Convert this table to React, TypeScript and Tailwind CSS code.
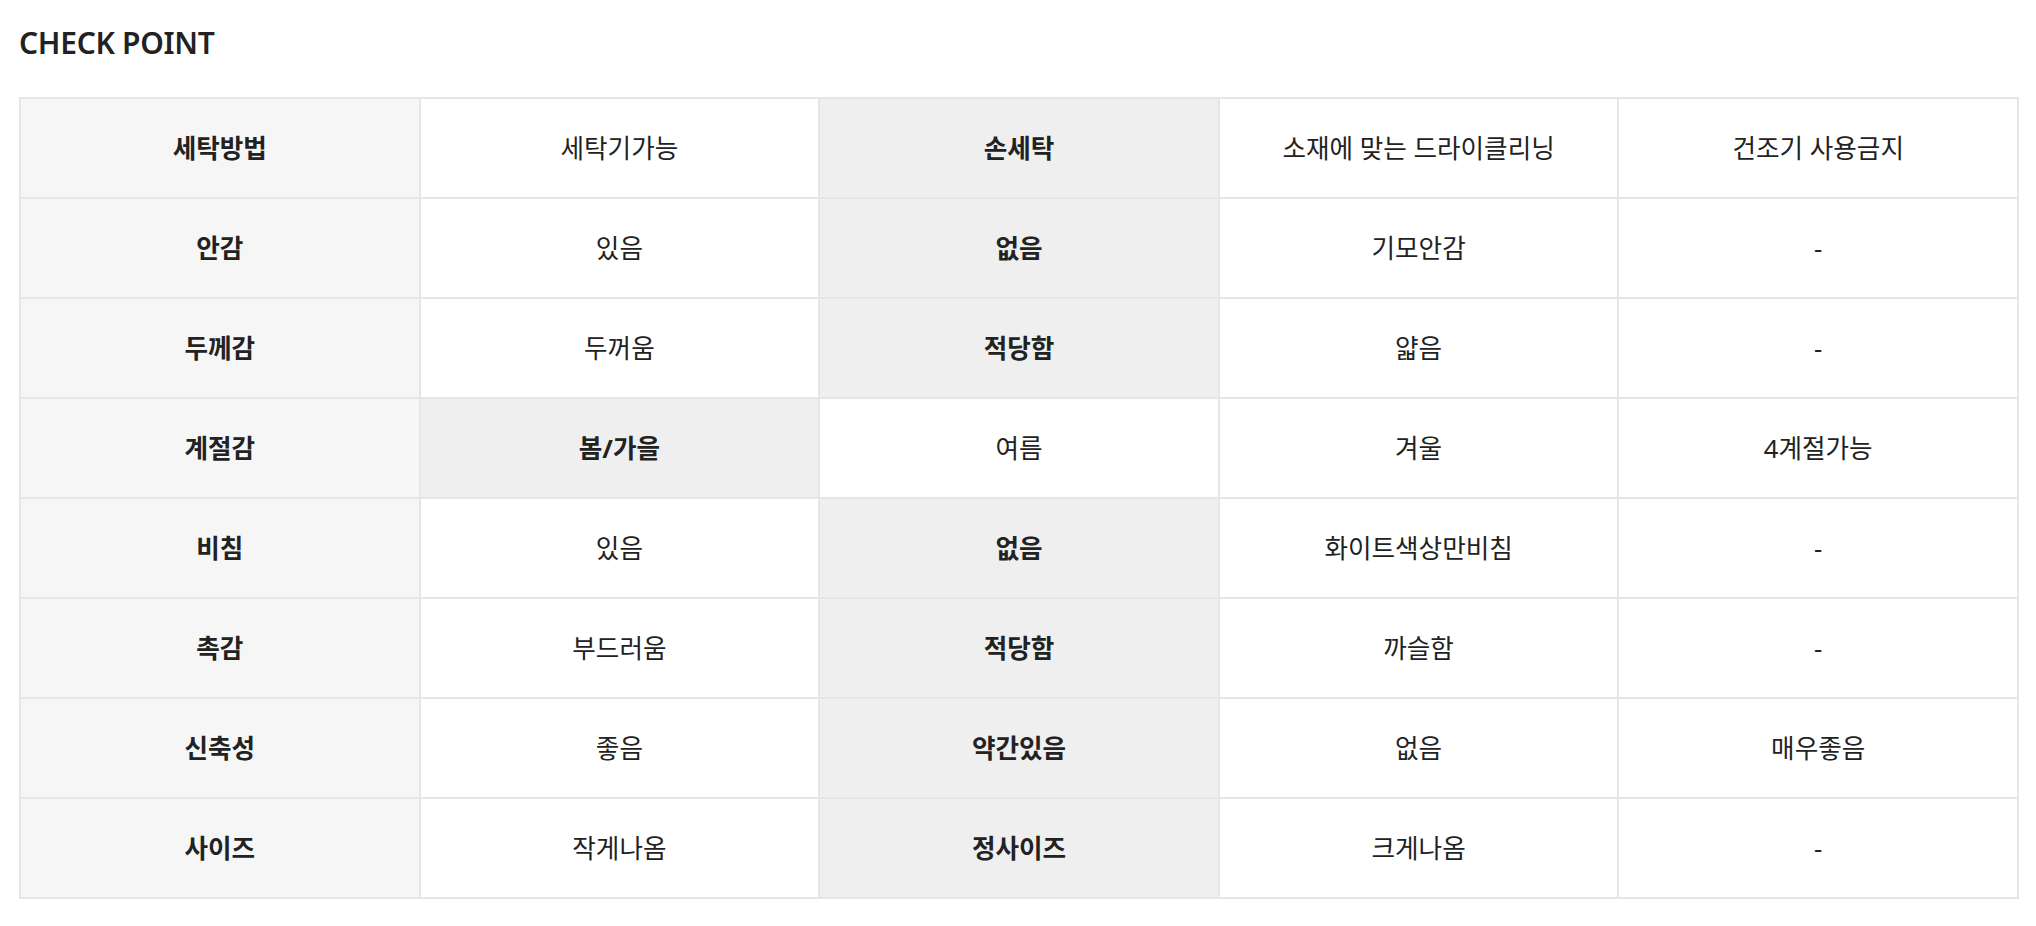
import React from "react";

type Cell = { t: string; hl?: boolean };

const rows: { head: string; cells: Cell[] }[] = [
  { head: "세탁방법", cells: [{ t: "세탁기가능" }, { t: "손세탁", hl: true }, { t: "소재에 맞는 드라이클리닝" }, { t: "건조기 사용금지" }] },
  { head: "안감", cells: [{ t: "있음" }, { t: "없음", hl: true }, { t: "기모안감" }, { t: "-" }] },
  { head: "두께감", cells: [{ t: "두꺼움" }, { t: "적당함", hl: true }, { t: "얇음" }, { t: "-" }] },
  { head: "계절감", cells: [{ t: "봄/가을", hl: true }, { t: "여름" }, { t: "겨울" }, { t: "4계절가능" }] },
  { head: "비침", cells: [{ t: "있음" }, { t: "없음", hl: true }, { t: "화이트색상만비침" }, { t: "-" }] },
  { head: "촉감", cells: [{ t: "부드러움" }, { t: "적당함", hl: true }, { t: "까슬함" }, { t: "-" }] },
  { head: "신축성", cells: [{ t: "좋음" }, { t: "약간있음", hl: true }, { t: "없음" }, { t: "매우좋음" }] },
  { head: "사이즈", cells: [{ t: "작게나옴" }, { t: "정사이즈", hl: true }, { t: "크게나옴" }, { t: "-" }] },
];

export default function App() {
  return (
    <div
      className="min-h-screen bg-white text-[#222222]"
      style={{ fontFamily: '"Noto Sans", "Noto Sans CJK KR", sans-serif' }}
    >
      <div className="pl-[19px] pt-[23px]">
        <h2 className="text-[30px] font-semibold leading-[40px] tracking-[-0.3px]">CHECK POINT</h2>
        <div className="mt-[34px] grid w-[2000px] grid-cols-5 border-l-2 border-t-2 border-[#e6e6e6]">
          {rows.map((r) => (
            <React.Fragment key={r.head}>
              <div className="flex h-[100px] items-center justify-center border-b-2 border-r-2 border-[#e6e6e6] bg-[#f6f6f6] pt-[2px] text-[25.6px] font-bold">
                {r.head}
              </div>
              {r.cells.map((c, i) => (
                <div
                  key={i}
                  className={
                    c.hl
                      ? "flex h-[100px] items-center justify-center border-b-2 border-r-2 border-[#e6e6e6] bg-[#efefef] pt-[2px] text-[25.6px] font-bold"
                      : "flex h-[100px] items-center justify-center border-b-2 border-r-2 border-[#e6e6e6] bg-white pt-[2px] text-[25.6px]"
                  }
                >
                  {c.t}
                </div>
              ))}
            </React.Fragment>
          ))}
        </div>
      </div>
    </div>
  );
}
